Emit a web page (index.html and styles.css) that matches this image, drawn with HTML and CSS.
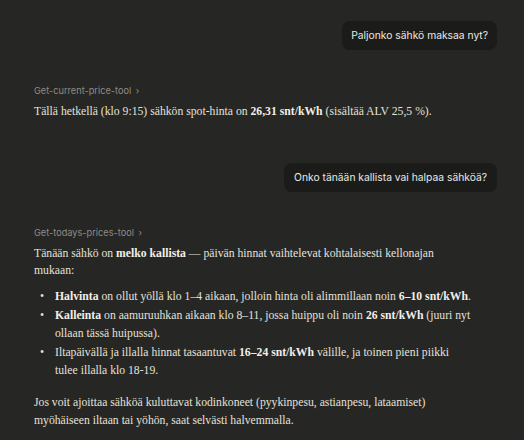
FILE: index.html
```html
<!DOCTYPE html>
<html>
<head>
<meta charset="utf-8">
<link rel="stylesheet" href="styles.css">
</head>
<body>
<div class="chat">
  <div class="user-row"><div class="bubble">Paljonko sähkö maksaa nyt?</div></div>
  <div class="assistant first">
    <div class="tool">Get-current-price-tool <span class="chev">›</span></div>
    <p>Tällä hetkellä (klo 9:15) sähkön spot-hinta on <b>26,31 snt/kWh</b> (sisältää ALV 25,5 %).</p>
  </div>
  <div class="user-row second"><div class="bubble">Onko tänään kallista vai halpaa sähköä?</div></div>
  <div class="assistant second-a">
    <div class="tool">Get-todays-prices-tool <span class="chev">›</span></div>
    <p class="intro">Tänään sähkö on <b>melko kallista</b> — päivän hinnat vaihtelevat kohtalaisesti kellonajan mukaan:</p>
    <ul>
      <li><b>Halvinta</b> on ollut yöllä klo 1–4 aikaan, jolloin hinta oli alimmillaan noin <b>6–10 snt/kWh</b>.</li>
      <li><b>Kalleinta</b> on aamuruuhkan aikaan klo 8–11, jossa huippu oli noin <b>26 snt/kWh</b> (juuri nyt ollaan tässä huipussa).</li>
      <li>Iltapäivällä ja illalla hinnat tasaantuvat <b>16–24 snt/kWh</b> välille, ja toinen pieni piikki tulee illalla klo 18-19.</li>
    </ul>
    <p>Jos voit ajoittaa sähköä kuluttavat kodinkoneet (pyykinpesu, astianpesu, lataamiset) myöhäiseen iltaan tai yöhön, saat selvästi halvemmalla.</p>
  </div>
</div>
</body>
</html>
```
FILE: styles.css
```css
html, body { margin: 0; padding: 0; background: #262624; }
body { width: 524px; height: 440px; overflow: hidden; }
.chat { padding: 21px 51px 0 34px; }
.user-row { display: flex; justify-content: flex-end; margin-right: -24px; }
.bubble {
  background: #1b1b19;
  color: #ece9e2;
  font-family: Inter, "Noto Sans", sans-serif;
  font-size: 10.3px;
  line-height: 15px;
  padding: 7px 9px;
  border-radius: 8px;
}
.user-row.second .bubble { padding: 7px 10px; }
.assistant { color: #e4e1da; font-family: "Liberation Serif", serif; font-size: 11.7px; line-height: 17.5px; }
.assistant.first { margin-top: 34px; }
.user-row.second { margin-top: 42px; }
.assistant.second-a { margin-top: 34px; }
.tool { font-family: Inter, "Noto Sans", sans-serif; font-size: 9.2px; color: #8f8c85; line-height: 13px; margin-bottom: 6px; }
.chev { margin-left: 2px; }
p { margin: 0 0 12px; }
p.intro { margin-bottom: 8px; }
b { font-weight: bold; color: #f2efe8; }
ul { margin: 0 0 15px; padding-left: 21px; list-style: none; }
li { margin-bottom: 2px; }
li::before { content: "•"; display: inline-block; width: 15px; margin-left: -15px; }
```
